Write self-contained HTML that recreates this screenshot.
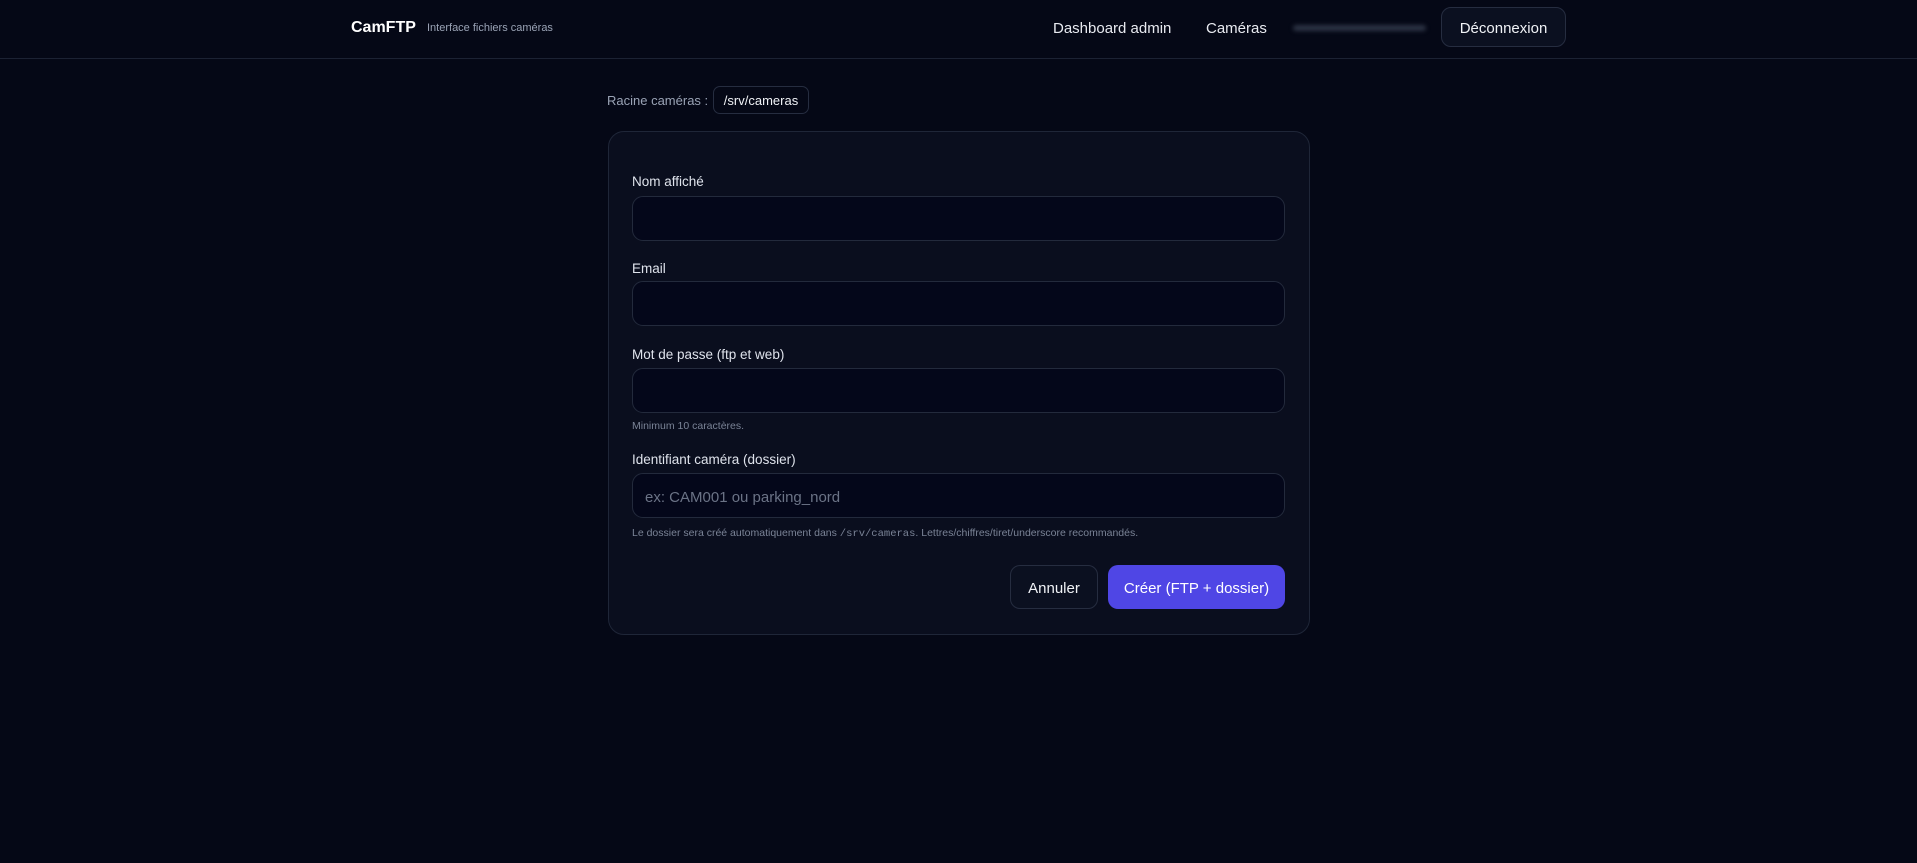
<!DOCTYPE html>
<html><head><meta charset="utf-8"><style>
*{box-sizing:border-box;margin:0;padding:0}
body{width:1917px;height:863px;background:#050816;font-family:"Liberation Sans",sans-serif;color:#e5e7eb;position:relative;overflow:hidden}
.a{position:absolute;white-space:nowrap}
.hdr{position:absolute;left:0;top:0;width:1917px;height:59px;border-bottom:1px solid #1c2233}
.card{position:absolute;left:608px;top:131px;width:702px;height:504px;background:#0a0e1e;border:1px solid #1f2638;border-radius:16px}
.lbl{font-size:13.5px;color:#dfe3ec}
.inp{position:absolute;left:632px;width:653px;height:45px;background:#04071a;border:1px solid #232a3c;border-radius:11px}
.hint{font-size:10.5px;color:#7a8396}
.btn{position:absolute;border-radius:10px;font-size:15px;display:flex;align-items:center;justify-content:center}
</style></head><body>
<div class="hdr"></div>
<div class="a" style="left:351px;top:19px;font-size:16px;font-weight:bold;color:#fff">CamFTP</div>
<div class="a" style="left:427px;top:22px;font-size:11px;color:#9aa3b5">Interface fichiers caméras</div>
<div class="a" style="left:1053px;top:20px;font-size:15px;color:#e8eaf0">Dashboard admin</div>
<div class="a" style="left:1206px;top:20px;font-size:15px;color:#e8eaf0">Caméras</div>
<div class="a" style="left:1293px;top:25px;width:133px;height:6px;background:#2c3344;border-radius:3px;filter:blur(2px)"></div>
<div class="btn" style="left:1441px;top:7px;width:125px;height:40px;border:1px solid #262d40;background:#0b1020;color:#f0f2f6;padding-top:2px">Déconnexion</div>
<div class="a" style="left:607px;top:93px;font-size:13px;color:#9aa3b5">Racine caméras :</div>
<div class="btn" style="left:713px;top:86px;width:96px;height:28px;border:1px solid #262d40;border-radius:7px;font-size:13px;color:#f0f2f6">/srv/cameras</div>
<div class="card"></div>
<div class="a lbl" style="left:632px;top:174px">Nom affiché</div>
<div class="inp" style="top:196px"></div>
<div class="a lbl" style="left:632px;top:261px">Email</div>
<div class="inp" style="top:281px"></div>
<div class="a lbl" style="left:632px;top:347px">Mot de passe (ftp et web)</div>
<div class="inp" style="top:368px"></div>
<div class="a hint" style="left:632px;top:420px">Minimum 10 caractères.</div>
<div class="a lbl" style="left:632px;top:452px">Identifiant caméra (dossier)</div>
<div class="inp" style="top:473px"></div>
<div class="a" style="left:645px;top:489px;font-size:15px;color:#6b7386">ex: CAM001 ou parking_nord</div>
<div class="a hint" style="left:632px;top:527px">Le dossier sera créé automatiquement dans <span style="font-family:'Liberation Mono',monospace">/srv/cameras</span>. Lettres/chiffres/tiret/underscore recommandés.</div>
<div class="btn" style="left:1010px;top:565px;width:88px;height:44px;border:1px solid #262d40;background:#0b1020;color:#f0f2f6;padding-top:2px">Annuler</div>
<div class="btn" style="left:1108px;top:565px;width:177px;height:44px;background:#4f46e5;color:#fff;padding-top:2px">Créer (FTP + dossier)</div>
</body></html>
